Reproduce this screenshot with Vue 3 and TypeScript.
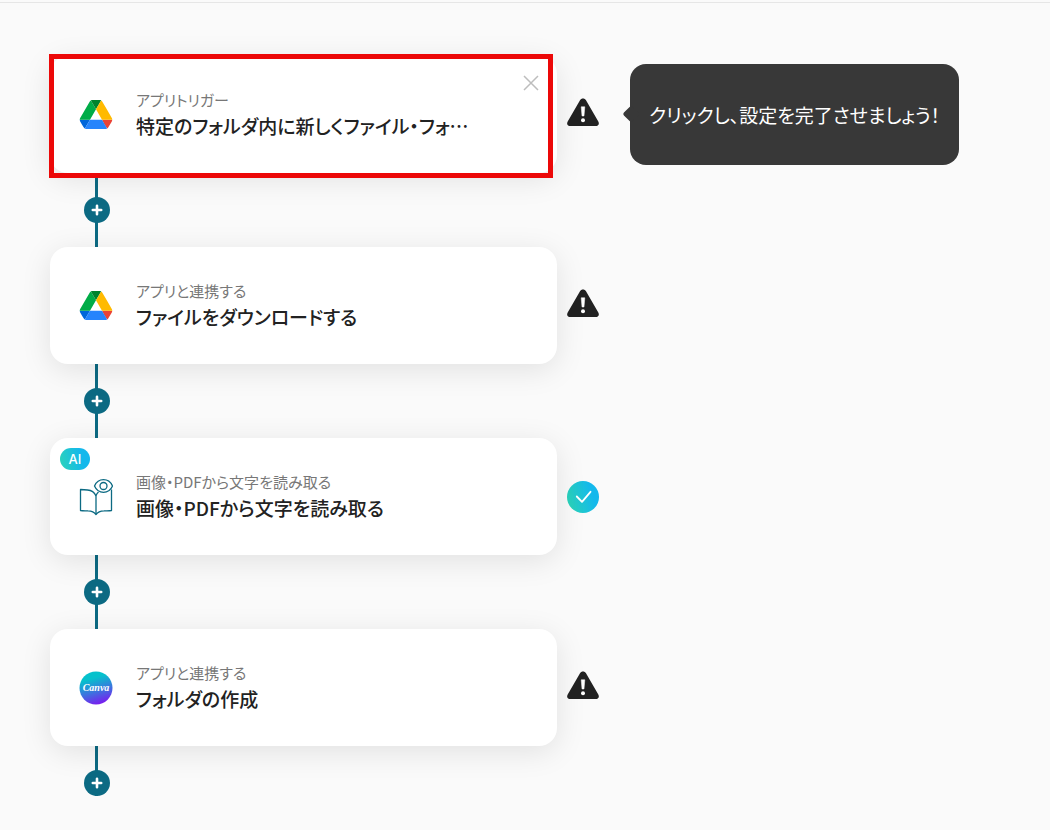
<script setup lang="ts">
import { ref } from 'vue'

type Icon = 'drive' | 'ocr' | 'canva'

interface Step {
  id: number
  kind: string
  title: string
  icon: Icon
  done: boolean
  ai?: boolean
  hint?: string
}

const steps: Step[] = [
  { id: 1, kind: 'アプリトリガー', title: '特定のフォルダ内に新しくファイル・フォ…', icon: 'drive', done: false, hint: 'クリックし、設定を完了させましょう！' },
  { id: 2, kind: 'アプリと連携する', title: 'ファイルをダウンロードする', icon: 'drive', done: false },
  { id: 3, kind: '画像・PDFから文字を読み取る', title: '画像・PDFから文字を読み取る', icon: 'ocr', done: true, ai: true },
  { id: 4, kind: 'アプリと連携する', title: 'フォルダの作成', icon: 'canva', done: false },
]

const selected = ref(1)
</script>

<template>
  <main class="flow">
    <section v-for="step in steps" :key="step.id" class="step">
      <div class="row">
        <article class="card" :class="{ selected: selected === step.id }" @click="selected = step.id">
          <span v-if="step.ai" class="ai">AI</span>
          <svg v-if="step.icon === 'drive'" class="icon" viewBox="-2 0 91.3 78" aria-hidden="true">
            <path fill="#0066da" d="m6.6 66.85 3.85 6.65c.8 1.4 1.95 2.5 3.3 3.3l13.75-23.8h-27.5c0 1.55.4 3.1 1.2 4.5z" />
            <path fill="#00ac47" d="m43.65 25-13.75-23.8c-1.35.8-2.5 1.9-3.3 3.3l-25.4 44a9.06 9.06 0 0 0 -1.2 4.5h27.5z" />
            <path fill="#ea4335" d="m73.55 76.8c1.35-.8 2.5-1.9 3.3-3.3l1.6-2.75 7.65-13.25c.8-1.4 1.2-2.95 1.2-4.5h-27.502l5.852 11.5z" />
            <path fill="#00832d" d="m43.65 25 13.75-23.8c-1.35-.8-2.9-1.2-4.5-1.2h-18.5c-1.6 0-3.15.45-4.5 1.2z" />
            <path fill="#2684fc" d="m59.8 53h-32.3l-13.75 23.8c1.35.8 2.9 1.2 4.5 1.2h50.8c1.6 0 3.15-.45 4.5-1.2z" />
            <path fill="#ffba00" d="m73.4 26.5-12.7-22c-.8-1.4-1.95-2.5-3.3-3.3l-13.75 23.8 16.15 28h27.45c0-1.55-.4-3.1-1.2-4.5z" />
          </svg>
          <svg v-else-if="step.icon === 'ocr'" class="icon" viewBox="0 0 34 38" fill="none" stroke="#0c6a83" stroke-width="1.3" stroke-linejoin="round" aria-hidden="true">
            <path d="M17 18c-1.500-3.500-4.500-5.800-8.500-6L1.500 11.500V32.500c3 .4 5 .2 7.500.4 4 .2 6.500 1.600 8 3.600 1.500-2 4-3.400 8-3.600 2.500-.2 4.500 0 7.500-.4V11.500" />
            <path d="M17 17.500V36M17 17.500c.8-1.500 1.500-2.500 2.500-3.400" />
            <path fill="#fff" d="M15.500 8c2-4.500 5-6.300 9-6.300s7 1.800 9 6.300c-2 4.500-5 6.300-9 6.300s-7-1.800-9-6.300z" />
            <circle cx="24.500" cy="8" r="3.500" />
          </svg>
          <svg v-else class="icon" viewBox="0 0 34 34" role="img" aria-label="Canva">
            <defs>
              <linearGradient id="canva-base" x1="0.350" y1="0" x2="0.650" y2="1">
                <stop offset="0.200" stop-color="#05c1cc" />
                <stop offset="0.600" stop-color="#3d73df" />
                <stop offset="1" stop-color="#7d17f0" />
              </linearGradient>
            </defs>
            <circle cx="17" cy="17" r="16.500" fill="url(#canva-base)" />
            <text class="wordmark" x="17" y="20" text-anchor="middle">Canva</text>
          </svg>
          <div class="copy">
            <p class="kind">{{ step.kind }}</p>
            <h2 class="title">{{ step.title }}</h2>
          </div>
          <button v-if="selected === step.id" class="close" type="button" aria-label="閉じる">
            <svg viewBox="0 0 16 16" aria-hidden="true"><path d="M1 1l14 14M15 1L1 15" fill="none" stroke="#bdbdbd" stroke-width="1.500" /></svg>
          </button>
        </article>
        <svg v-if="step.done" class="status" viewBox="0 0 32 32" role="img" aria-label="完了">
          <defs>
            <linearGradient id="done-fill" x1="0" y1="0.650" x2="1" y2="0.350">
              <stop offset="0" stop-color="#2bd4b8" />
              <stop offset="0.800" stop-color="#14b8ec" />
            </linearGradient>
          </defs>
          <circle cx="16" cy="16" r="16" fill="url(#done-fill)" />
          <path d="M9.800 15.500l5.200 5.300 8.500-10" fill="none" stroke="#fff" stroke-width="1.800" stroke-linecap="round" stroke-linejoin="round" />
        </svg>
        <svg v-else class="status" viewBox="0 2 32 32" role="img" aria-label="未設定">
          <path d="M13 3.200c1.300-2.200 4.700-2.200 6 0l12.300 21.200c1.400 2.400 0 4.600-2.600 4.600H3.300C.7 29-.7 26.800.7 24.400z" fill="#222" />
          <path d="M14.200 9.800h3.600l-.8 9.200h-2z" fill="#fff" stroke="#fff" stroke-width=".5" stroke-linejoin="round" />
          <circle cx="16" cy="23.200" r="2" fill="#fff" />
        </svg>
        <p v-if="step.hint" class="hint">{{ step.hint }}</p>
      </div>
      <div class="link" :class="{ last: step.id === steps.length }">
        <button class="add" type="button" aria-label="ステップを追加">
          <svg viewBox="0 0 12 12" aria-hidden="true"><path d="M6 1.800v8.400M1.800 6h8.400" stroke="#fff" stroke-width="2.600" stroke-linecap="round" /></svg>
        </button>
      </div>
    </section>
  </main>
</template>

<style>
body {
  margin: 0;
  background: #fafafa;
}
</style>

<style scoped>
.flow {
  box-sizing: border-box;
  min-height: 100vh;
  border-top: 2px solid #fafafa;
  box-shadow: inset 0 1px #e6e6e6;
  padding: 54px 50px 34px;
  font-family: "Noto Sans CJK JP", "Noto Sans", sans-serif;
  font-feature-settings: "palt";
  color: #222;
}
.row {
  display: flex;
  align-items: center;
}
.card {
  position: relative;
  box-sizing: border-box;
  display: flex;
  align-items: center;
  flex: 0 1 507px;
  min-width: 0;
  min-height: 117px;
  padding: 24px 76px 24px 29px;
  border-radius: 18px;
  background: #fff;
  box-shadow: 0 6px 30px rgba(0, 0, 0, 0.1);
  cursor: pointer;
}
.card.selected::after {
  content: "";
  position: absolute;
  inset: -2px 4px -5px -1px;
  border: 5px solid #ec0808;
  pointer-events: none;
}
.icon {
  flex: none;
  width: 34px;
  max-height: 38px;
  margin-right: 23px;
}
.wordmark {
  fill: #fff;
  font: italic bold 10px "Liberation Serif", serif;
}
.copy {
  min-width: 0;
}
.kind,
.title {
  margin: 0;
  overflow: hidden;
  white-space: nowrap;
  text-overflow: ellipsis;
}
.kind {
  font-size: 15px;
  line-height: 22px;
  color: #777;
}
.title {
  font-size: 19px;
  line-height: 30px;
  font-weight: 500;
}
.ai {
  position: absolute;
  top: 10px;
  left: 10px;
  width: 30px;
  border-radius: 11px;
  background: linear-gradient(75deg, #2bd4b8, #14b8ec 70%);
  color: #fff;
  font-family: Inter, sans-serif;
  font-size: 13px;
  line-height: 22px;
  font-weight: 500;
  text-align: center;
}
button {
  padding: 0;
  border: 0;
  background: none;
  cursor: pointer;
}
.close {
  position: absolute;
  top: 19px;
  right: 18px;
  width: 16px;
  height: 16px;
}
.close svg {
  display: block;
}
.status {
  flex: none;
  width: 32px;
  height: 32px;
  margin-left: 10px;
  overflow: visible;
}
.hint {
  position: relative;
  box-sizing: border-box;
  margin: 0 0 0 31px;
  padding: 36px 19px;
  border-radius: 16px;
  background: #383838;
  color: #fff;
  font-size: 19px;
  line-height: 29px;
  white-space: nowrap;
}
.hint::before {
  content: "";
  position: absolute;
  top: 44px;
  left: -5px;
  width: 12px;
  height: 12px;
  border-radius: 2px;
  background: #383838;
  transform: rotate(45deg);
}
.link {
  display: flex;
  align-items: center;
  justify-content: center;
  width: 94px;
  height: 74px;
  background: linear-gradient(#0c6a83, #0c6a83) 45px 0 / 3px 100% no-repeat;
}
.link.last {
  height: 50px;
  align-items: flex-end;
}
.add {
  display: grid;
  place-items: center;
  width: 26px;
  height: 26px;
  border-radius: 50%;
  background: #0c6a83;
}
.add svg {
  width: 12px;
}
</style>
